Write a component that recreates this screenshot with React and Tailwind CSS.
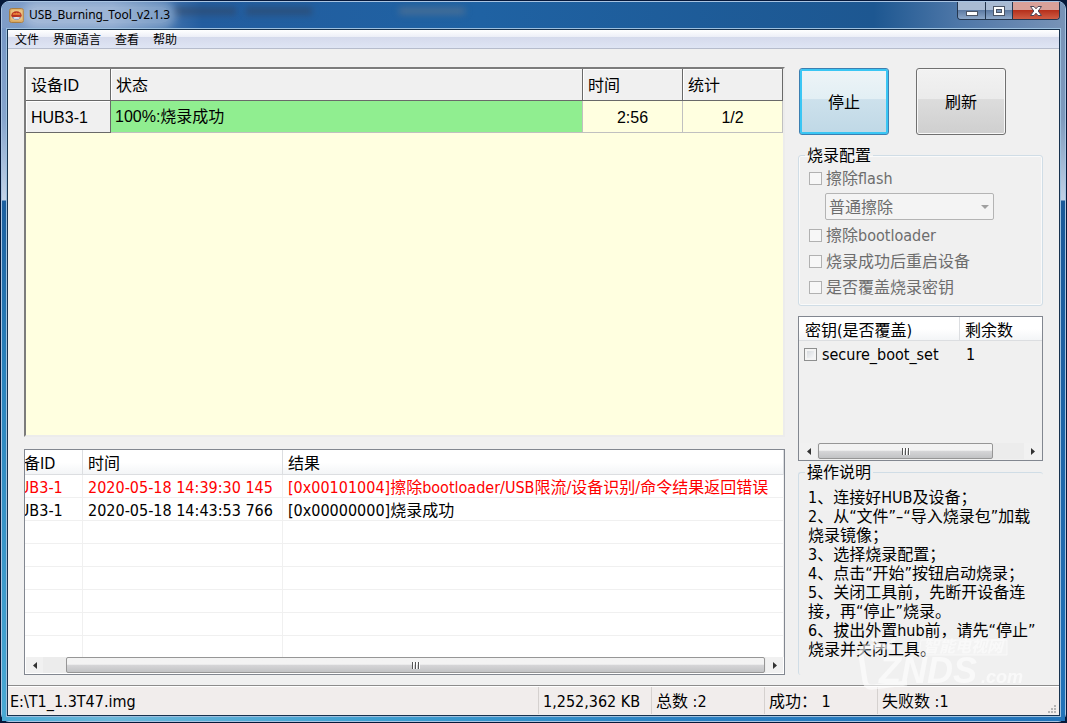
import React from "react";

const logRows = [
  { id: "HUB3-1", time: "2020-05-18 14:39:30 145", result: "[0x00101004]擦除bootloader/USB限流/设备识别/命令结果返回错误", error: true },
  { id: "HUB3-1", time: "2020-05-18 14:43:53 766", result: "[0x00000000]烧录成功", error: false },
  null,
  null,
  null,
  null,
  null,
  null,
];

const instructions = [
  "1、连接好HUB及设备；",
  "2、从“文件”–“导入烧录包”加载",
  "烧录镜像；",
  "3、选择烧录配置；",
  "4、点击“开始”按钮启动烧录；",
  "5、关闭工具前，先断开设备连",
  "接，再“停止”烧录。",
  "6、拔出外置hub前，请先“停止”",
  "烧录并关闭工具。",
];

function AppIcon() {
  return (
    <svg width="15" height="15" viewBox="0 0 15 15" aria-hidden="true">
      <rect x="0.5" y="0.5" width="14" height="14" rx="2" fill="#d9a860" stroke="#a87c42" />
      <rect x="2" y="1.5" width="11" height="11" rx="2" fill="#eac27c" />
      <ellipse cx="7.5" cy="7.3" rx="5.2" ry="4.1" fill="#b8321f" />
      <path d="M3.6 6.8 L4.8 4.8 L6.2 5.6 L7.5 4.4 L8.8 5.6 L10.2 4.8 L11.4 6.8 Z" fill="#f08a3c" />
      <path d="M3 9 H12 Q10.5 12 7.5 12 Q4.5 12 3 9 Z" fill="#8fa3c4" />
      <ellipse cx="7.5" cy="9.9" rx="3" ry="0.9" fill="#e6e9f0" />
    </svg>
  );
}

function ScrollBar({ lead, tail, label }) {
  return (
    <div className="flex h-4 shrink-0 bg-[#ececec]">
      <button aria-label={label + "向左"} className="flex w-[17px] items-center justify-center bg-[#f1f1f1]">
        <svg width="4" height="7" viewBox="0 0 4 7"><path d="M4 0V7L0 3.5Z" fill="#333" /></svg>
      </button>
      <div className={lead} />
      <div className="flex flex-1 items-center justify-center gap-px rounded-xs border border-[#969696] bg-linear-to-b from-[#f3f3f3] from-45% via-[#d6d6d8] via-50% to-[#c2c3c5]">
        <i className="h-[7px] w-[2px] border-r border-white bg-[#555]" />
        <i className="h-[7px] w-[2px] border-r border-white bg-[#555]" />
        <i className="h-[7px] w-[2px] border-r border-white bg-[#555]" />
      </div>
      <div className={tail} />
      <button aria-label={label + "向右"} className="flex w-[17px] items-center justify-center bg-[#f1f1f1]">
        <svg width="4" height="7" viewBox="0 0 4 7"><path d="M0 0V7L4 3.5Z" fill="#333" /></svg>
      </button>
    </div>
  );
}

function Option({ children }) {
  return (
    <label className="flex h-[26px] items-center gap-1 whitespace-nowrap">
      <input type="checkbox" disabled className="size-[13px] appearance-none border border-[#b1b1b1] bg-[#f7f7f7]" />
      <span className="pt-[2px]">{children}</span>
    </label>
  );
}

function TitleBar() {
  return (
    <header className="relative flex h-[26px] items-start overflow-hidden rounded-t-md">
      <div className="absolute inset-0 bg-[linear-gradient(to_right,#7f9dc8_0px,#7295c4_110px,#235d9f_200px,#1f62a3_45%,#1d5791_82%,#4e77a8_90%,#7893b7_100%)]" />
      <div className="absolute top-[5px] left-[172px] h-2 w-[62px] bg-[#33425a]/50 blur-[3px]" />
      <div className="absolute top-[5px] left-[244px] h-2 w-[66px] bg-[#33425a]/50 blur-[3px]" />
      <div className="absolute top-[5px] left-[397px] h-2 w-[66px] bg-[#5a7590]/60 blur-[3px]" />
      <div className="relative flex flex-1 items-center gap-[5px] self-stretch pl-[7px]">
        <AppIcon />
        <h1 className="rounded-full bg-white/30 font-['Noto_Sans','Noto_Sans_CJK_SC',sans-serif] text-xs leading-4 whitespace-nowrap text-black shadow-[0_0_8px_6px_rgba(255,255,255,0.3)]">
          USB_Burning_Tool_v2.1.3
        </h1>
      </div>
      <div className="relative mr-[5px] flex h-[18px] overflow-hidden rounded-b-[4px] border border-t-0 border-[#24364e]">
        <button aria-label="最小化" className="flex w-7 items-center justify-center border-r border-[#24364e] bg-linear-to-b from-[#a9bbd3] from-45% via-[#5e7ba3] via-50% to-[#8ea8c9]">
          <svg width="12" height="12" viewBox="0 0 12 12"><rect x="0.5" y="6.5" width="11" height="4" fill="#fff" stroke="#4b5566" /></svg>
        </button>
        <button aria-label="最大化" className="flex w-[27px] items-center justify-center border-r border-[#24364e] bg-linear-to-b from-[#a9bbd3] from-45% via-[#5e7ba3] via-50% to-[#8ea8c9]">
          <svg width="12" height="10" viewBox="0 0 12 10"><rect x="0.5" y="0.5" width="11" height="9" fill="#fff" stroke="#4b5566" /><rect x="3.5" y="3.5" width="5" height="3" fill="#7893b7" stroke="#4b5566" /></svg>
        </button>
        <button aria-label="关闭" className="flex w-[46px] items-center justify-center bg-linear-to-b from-[#d9a199] from-45% via-[#b6301c] via-50% to-[#cf5c44]">
          <svg width="12" height="10" viewBox="0 0 12 10"><path d="M0.5 0.5H4L6 2.8L8 0.5H11.5L8.2 5L11.5 9.5H8L6 7.2L4 9.5H0.5L3.8 5Z" fill="#fff" stroke="#4b4456" /></svg>
        </button>
      </div>
    </header>
  );
}

function DeviceTable() {
  const head = "border-r border-b border-[#696969] p-0 pt-[2px] pl-[5px] text-left font-normal shadow-[inset_1px_1px_0_#fff]";
  const value = "border-r border-b border-[#c0c0c0] p-0 pt-[2px] text-center";
  return (
    <div className="flex-1 border-2 border-t-[#7c7c7c] border-r-[#ececec] border-b-[#ececec] border-l-[#7c7c7c] bg-[#ffffe0] font-['Liberation_Sans','Noto_Sans_CJK_SC',sans-serif] text-base leading-5">
      <table className="w-full table-fixed border-separate border-spacing-0">
        <colgroup>
          <col className="w-[85px]" />
          <col />
          <col className="w-[100px]" />
          <col className="w-[100px]" />
        </colgroup>
        <thead>
          <tr className="h-8 bg-[#f0f0f0]">
            <th className={head}>设备ID</th>
            <th className={head}>状态</th>
            <th className={head}>时间</th>
            <th className={head}>统计</th>
          </tr>
        </thead>
        <tbody>
          <tr className="h-8">
            <th className={head + " bg-[#f0f0f0]"}>HUB3-1</th>
            <td className="border-r border-b border-[#c0c0c0] bg-[#90ee90] p-0 pl-1">100%:烧录成功</td>
            <td className={value}>2:56</td>
            <td className={value}>1/2</td>
          </tr>
        </tbody>
      </table>
    </div>
  );
}

function LogList() {
  const head = "border-r border-b border-[#dcdee1] p-0 pt-1 pl-[5px] text-left font-normal";
  const cell = "border-r border-b border-[#f0f0f0] p-0 pt-1 pl-[5px]";
  return (
    <div className="flex h-[226px] flex-col border border-[#828790] bg-white">
      <div className="flex-1 overflow-hidden">
        <div className="-ml-[22px]">
          <table className="w-full table-fixed border-separate border-spacing-0 leading-[18px] whitespace-nowrap">
            <colgroup>
              <col className="w-20" />
              <col className="w-[200px]" />
              <col />
            </colgroup>
            <thead>
              <tr className="h-[25px] bg-linear-to-b from-white from-50% to-[#f2f4f6]">
                <th className={head}>设备ID</th>
                <th className={head}>时间</th>
                <th className={head}>结果</th>
              </tr>
            </thead>
            <tbody>
              {logRows.map((row, i) => (
                <tr key={i} className={row && row.error ? "h-[23px] text-[#ff0000]" : "h-[23px]"}>
                  <td className={cell}>{row && row.id}</td>
                  <td className={cell}>{row && row.time}</td>
                  <td className={cell}>{row && row.result}</td>
                </tr>
              ))}
            </tbody>
          </table>
        </div>
      </div>
      <div className="px-px pb-px">
        <ScrollBar lead="w-[23px]" tail="w-px" label="日志" />
      </div>
    </div>
  );
}

function KeyList() {
  return (
    <div className="mt-[10px] flex h-[145px] flex-col border border-[#828790]">
      <div className="flex-1">
        <table className="w-full table-fixed border-separate border-spacing-0 leading-[18px] whitespace-nowrap">
          <colgroup>
            <col className="w-[161px]" />
            <col />
          </colgroup>
          <thead>
            <tr className="h-6 bg-linear-to-b from-white from-50% to-[#f2f4f6]">
              <th className="border-r border-b border-[#dcdee1] p-0 pt-1 pl-[6px] text-left font-normal">密钥(是否覆盖)</th>
              <th className="border-b border-[#dcdee1] p-0 pt-1 pl-[5px] text-left font-normal">剩余数</th>
            </tr>
          </thead>
          <tbody>
            <tr className="h-[26px]">
              <td className="p-0 pl-[5px]">
                <label className="flex items-center gap-[5px]">
                  <input type="checkbox" className="size-[13px] appearance-none border border-[#8e8f8f] bg-linear-to-br from-[#cfd3d8] to-white shadow-[inset_0_0_0_2px_#f4f4f4]" />
                  <span className="pt-[2px]">secure_boot_set</span>
                </label>
              </td>
              <td className="p-0 pt-[2px] pl-[6px]">1</td>
            </tr>
          </tbody>
        </table>
      </div>
      <div className="px-px pb-px">
        <ScrollBar lead="w-px" tail="w-[31px]" label="密钥" />
      </div>
    </div>
  );
}

function SidePanel() {
  return (
    <aside className="flex w-[245px] shrink-0 flex-col">
      <div className="flex gap-[27px] pt-px pl-px">
        <button className="h-[67px] w-[90px] rounded-[3px] border border-[#3c7fb1] pt-[2px] shadow-[inset_0_0_0_2px_#3ac6f4] [background-image:linear-gradient(#eef4f7,#e2eff4_46%,#cde1ec_47%,#bfd8e6)]">停止</button>
        <button className="h-[67px] w-[90px] rounded-[3px] border border-[#707070] pt-[2px] shadow-[inset_0_0_0_1px_#f8f8f8] [background-image:linear-gradient(#f2f2f2,#ebebeb_46%,#dcdcdc_47%,#cfcfcf)]">刷新</button>
      </div>
      <fieldset className="mt-[10px] rounded-[3px] border border-[#d0dde6] px-[10px] pb-[5px] text-[#6d6d6d] shadow-[inset_0_0_0_1px_#fafafa]">
        <legend className="-ml-1 px-[2px] pt-[2px] leading-[18px] text-black">烧录配置</legend>
        <Option>擦除flash</Option>
        <div className="relative my-[2px] ml-4 w-[169px]">
          <select aria-label="擦除方式" disabled className="block h-[27px] w-full appearance-none rounded-[2px] border border-[#b4b4b4] bg-[#f4f4f4] pt-[2px] pl-[3px] text-[#6d6d6d] opacity-100">
            <option>普通擦除</option>
          </select>
          <svg className="absolute top-[12px] right-[5px]" width="8" height="4" viewBox="0 0 8 4"><path d="M0 0H8L4 4Z" fill="#a0a0a0" /></svg>
        </div>
        <Option>擦除bootloader</Option>
        <Option>烧录成功后重启设备</Option>
        <Option>是否覆盖烧录密钥</Option>
      </fieldset>
      <KeyList />
      <fieldset className="mt-px flex-1 rounded-[3px] border border-r-0 border-b-0 border-[#d0dde6] pt-[6px] pl-[9px]">
        <legend className="-ml-[3px] px-[2px] pt-[2px] leading-[18px]">操作说明</legend>
        <div className="leading-[19px] whitespace-nowrap">
          {instructions.map((line) => (
            <p key={line}>{line}</p>
          ))}
        </div>
      </fieldset>
    </aside>
  );
}

function Watermark() {
  return (
    <div aria-hidden="true" className="pointer-events-none absolute right-[36px] bottom-[-6px] h-[54px] w-[164px] font-['Liberation_Sans','Noto_Sans_CJK_SC',sans-serif] font-bold text-white italic opacity-60">
      <svg className="absolute inset-0" width="164" height="54" viewBox="0 0 164 54" fill="none" stroke="#fff">
        <path d="M36 10H8Q2 10 2 18L6 44Q7 51 14 50L48 46" strokeWidth="5" />
        <path d="M22 9L12 1M28 9L36 2" strokeWidth="3" />
        <path d="M62 3H148V18H60Z" fill="#fff" fillOpacity="0.3" strokeWidth="1" />
      </svg>
      <span className="absolute top-[2px] left-[64px] text-base leading-4">智能电视网</span>
      <span className="absolute top-[18px] left-[20px] text-4xl leading-8">ZNDS</span>
      <span className="absolute top-[30px] left-[122px] text-lg leading-5">.com</span>
    </div>
  );
}

function StatusBar() {
  const cell = "w-[113px] border-l border-[#d5d1cf] pl-1 whitespace-pre";
  return (
    <footer className="flex h-[30px] items-stretch border-t border-[#8c8c8c] bg-[#f1edec] pt-px pb-px leading-[30px] shadow-[inset_0_1px_0_#fff]">
      <div className="flex-1 pl-[2px]">{"E:\\T1_1.3T47.img"}</div>
      <div className={cell}>1,252,362 KB</div>
      <div className={cell}>总数 :2</div>
      <div className={cell}>成功： 1</div>
      <div className="flex w-[182px] items-start justify-between border-l border-[#d5d1cf] pr-[2px] pl-1">
        <span>失败数 :1</span>
        <svg className="self-end" width="9" height="9" viewBox="0 0 9 9" fill="#b5b5b5"><path d="M6 0h2v2h-2zM3 3h2v2h-2zM6 3h2v2h-2zM0 6h2v2h-2zM3 6h2v2h-2zM6 6h2v2h-2z" /></svg>
      </div>
    </footer>
  );
}

export default function App() {
  return (
    <div className="flex min-h-screen flex-col bg-[#06183a] p-px font-['DejaVu_Sans_Condensed','Noto_Sans_CJK_SC',sans-serif] text-base text-black">
      <div className="flex flex-1 flex-col rounded-lg border border-[#a9c4e2] bg-[#2f8cc6]">
        <TitleBar />
        <div className="flex flex-1">
          <div className="w-1 bg-[linear-gradient(#7697c6_0px,#86a5cd_90px,#c3d3e8_172px,#1c5f9f_173px,#2a83bd_50%,#49a9d4_100%)]" />
          <div className="flex min-w-0 flex-1 flex-col border border-[#9dc0df]">
            <div className="flex flex-1 flex-col border border-[#17324e] bg-[#f0f0f0]">
              <nav className="flex h-[19px] gap-[14px] border-b border-[#b6bccc] bg-[linear-gradient(#fff,#eef0f8_36%,#d5daec_40%,#dfe5f4)] pl-[7px] font-['Noto_Sans_CJK_SC',sans-serif] text-xs leading-[18px]">
                <button>文件</button>
                <button>界面语言</button>
                <button>查看</button>
                <button>帮助</button>
              </nav>
              <main className="relative flex flex-1 gap-[13px] px-4 pt-[18px] pb-[10px]">
                <div className="flex min-w-0 flex-1 flex-col gap-3">
                  <DeviceTable />
                  <LogList />
                </div>
                <SidePanel />
                <Watermark />
              </main>
              <StatusBar />
            </div>
          </div>
          <div className="w-1 bg-[linear-gradient(#7893b7_0px,#7d9abd_90px,#c0d1e6_172px,#1b5998_173px,#2273b9_100%)]" />
        </div>
        <div className="h-1 bg-[linear-gradient(to_right,#49a9d4,#6cb8da_10%,#3f9fd0_35%,#2a80c2_65%,#2273b9)]" />
      </div>
    </div>
  );
}
